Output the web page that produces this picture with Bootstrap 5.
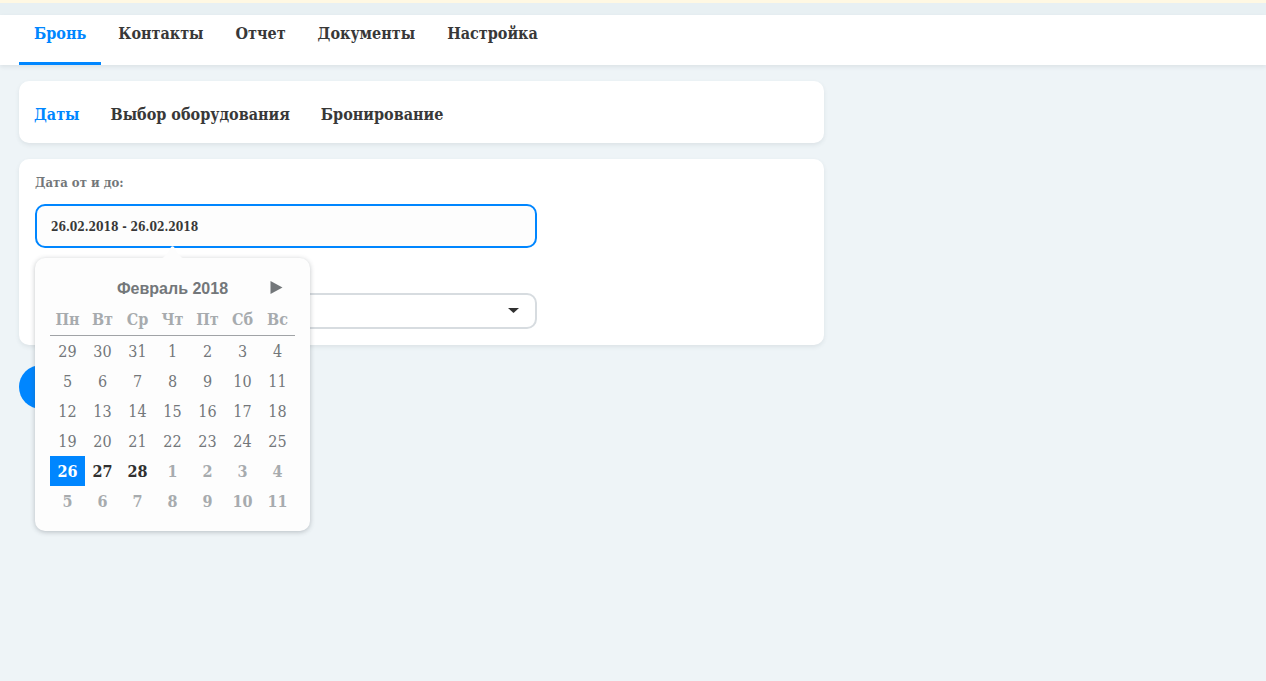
<!DOCTYPE html>
<html lang="ru">
<head>
<meta charset="utf-8">
<meta name="viewport" content="width=device-width, initial-scale=1">
<title>Бронь</title>
<link rel="stylesheet" href="https://cdn.jsdelivr.net/npm/bootstrap@5.3.0/dist/css/bootstrap.min.css">
<style>
:root { --accent: #0086ff; --ink: #383838; --soft: #73777a; --pale: #a7abae; }
body { background: #eef4f7; color: var(--ink); font-family: "Roboto Slab", "DejaVu Serif Condensed", "DejaVu Serif", serif; font-size: 16px; line-height: 20px; }
.strip { height: 15px; background: #e8f0f3; border-top: 3px solid #fff8e3; }
.panel { background: #fff; box-shadow: 0 2px 4px rgba(60, 75, 85, .1); }
.rounded-panel { border-radius: 10px; }
.page { padding-left: 4px; padding-right: 10px; }
.page > .row { --bs-gutter-x: 30px; margin: 0; }
.tabs { gap: 2px; }
.tabs .nav-link { padding: 0 15px; color: var(--ink); font-weight: 700; line-height: 20px; white-space: nowrap; }
.tabs .nav-link.active { color: var(--accent); }
.main-tabs { padding-left: 19px; }
.main-tabs .nav-link { padding-top: 9px; padding-bottom: 18px; border-bottom: 3px solid transparent; border-radius: 0; }
.main-tabs .nav-link.active { border-color: var(--accent); }
.sub-tabs { padding: 24px 0 18px; gap: 1px; }
.booking { padding: 14px 16px 16px; }
.field-area { width: 65%; }
.field-label { color: var(--soft); font-size: 13px; font-weight: 700; line-height: 20px; margin-bottom: 11px; display: block; }
.date-box, .date-box:focus { height: 44px; border: 2px solid var(--accent); border-radius: 10px; padding: 2px 14px 0; color: var(--ink); font-size: 12px; font-weight: 700; background: #fdfdfd; box-shadow: none; }
.pick { height: 36px; margin-top: 45px; border: 2px solid #d7dce0; border-radius: 10px; background-color: #fff; background-image: none; }
.arrow { right: 18px; top: 15px; width: 11px; height: 5px; }
.go { width: 200px; height: 44px; margin-top: 20px; border: 0; border-radius: 22px; background: var(--accent); }
.calendar { top: 100%; left: 0; z-index: 5; width: 275px; margin-top: 10px; padding: 15px; border-radius: 10px; background: #fdfdfd; box-shadow: 0 1px 5px rgba(50, 60, 70, .3); }
.tip { left: 125px; top: -12px; width: 25px; height: 13px; }
.cal-head { height: 31px; font-family: "Liberation Sans", sans-serif; font-size: 16px; font-weight: 700; color: var(--soft); }
.next { right: 12px; top: 7px; width: 14px; height: 16px; line-height: 0; }
.days { table-layout: fixed; border-collapse: separate; border-spacing: 0; text-align: center; color: var(--soft); }
.days th { height: 32px; padding: 0; border-bottom: 1px solid #a0a3a6; color: var(--pale); font-weight: 700; }
.days td { height: 30px; padding: 2px 0 0; }
.days .open { color: #303030; font-weight: 700; }
.days .chosen { background: var(--accent); color: #fff; font-weight: 700; }
.days .later { color: var(--pale); font-weight: 700; }
</style>
</head>
<body class="min-vh-100">
<div class="strip"></div>
<header class="panel">
  <nav class="nav tabs main-tabs">
    <a class="nav-link active" href="#">Бронь</a>
    <a class="nav-link" href="#">Контакты</a>
    <a class="nav-link" href="#">Отчет</a>
    <a class="nav-link" href="#">Документы</a>
    <a class="nav-link" href="#">Настройка</a>
  </nav>
</header>
<main class="container-fluid page pt-3">
  <div class="row">
    <div class="col-8">
      <nav class="nav tabs sub-tabs panel rounded-panel mb-3">
        <a class="nav-link active" href="#">Даты</a>
        <a class="nav-link" href="#">Выбор оборудования</a>
        <a class="nav-link" href="#">Бронирование</a>
      </nav>
      <form>
        <section class="booking panel rounded-panel">
          <div class="field-area">
            <label class="field-label" for="dates">Дата от и до:</label>
            <div class="position-relative">
              <input class="form-control date-box" id="dates" type="text" value="26.02.2018 - 26.02.2018">
              <div class="calendar position-absolute">
                <svg class="tip position-absolute" viewBox="0 0 25 13" aria-hidden="true"><path d="M0 13C5 12 9 5 11 1Q12.500-.5 14 1C16 5 20 12 25 13Z" fill="#fdfdfd"/></svg>
                <div class="cal-head position-relative d-flex align-items-center justify-content-center">
                  <span>Февраль 2018</span>
                  <button class="next btn p-0 border-0 position-absolute" type="button" aria-label="Следующий месяц"><svg width="14" height="16" viewBox="0 0 14 16"><path d="M1.500 1L13.500 7.500L1.500 14Z" fill="#73777a"/></svg></button>
                </div>
                <table class="days w-100">
                  <thead><tr><th>Пн</th><th>Вт</th><th>Ср</th><th>Чт</th><th>Пт</th><th>Сб</th><th>Вс</th></tr></thead>
                  <tbody>
                    <tr><td>29</td><td>30</td><td>31</td><td>1</td><td>2</td><td>3</td><td>4</td></tr>
                    <tr><td>5</td><td>6</td><td>7</td><td>8</td><td>9</td><td>10</td><td>11</td></tr>
                    <tr><td>12</td><td>13</td><td>14</td><td>15</td><td>16</td><td>17</td><td>18</td></tr>
                    <tr><td>19</td><td>20</td><td>21</td><td>22</td><td>23</td><td>24</td><td>25</td></tr>
                    <tr><td class="chosen">26</td><td class="open">27</td><td class="open">28</td><td class="later">1</td><td class="later">2</td><td class="later">3</td><td class="later">4</td></tr>
                    <tr><td class="later">5</td><td class="later">6</td><td class="later">7</td><td class="later">8</td><td class="later">9</td><td class="later">10</td><td class="later">11</td></tr>
                  </tbody>
                </table>
              </div>
            </div>
            <div class="position-relative">
              <select class="form-select pick" aria-label="Выбор"><option></option></select>
              <svg class="arrow position-absolute" viewBox="0 0 11 5" aria-hidden="true"><path d="M0 0H11L5.500 5Z" fill="#303030"/></svg>
            </div>
          </div>
        </section>
        <button class="go btn" type="button" aria-label="Продолжить"></button>
      </form>
    </div>
  </div>
</main>
<script src="https://cdn.jsdelivr.net/npm/bootstrap@5.3.0/dist/js/bootstrap.bundle.min.js"></script>
</body>
</html>
